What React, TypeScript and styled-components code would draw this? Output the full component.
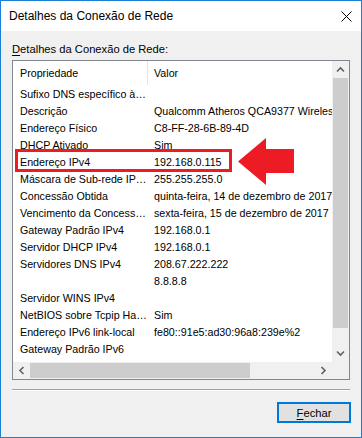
import React from 'react'
import styled, { createGlobalStyle } from 'styled-components'

const GlobalStyle = createGlobalStyle`
  html, body {
    margin: 0;
    padding: 0;
    background: #ffffff;
  }
  body {
    font-family: "Liberation Sans", Arial, sans-serif;
    font-size: 10.7px;
    color: #000000;
  }
`

const Window = styled.div`
  position: relative;
  box-sizing: border-box;
  width: 362px;
  height: 438px;
  border: 1px solid #1c7fd6;
  background: #f0f0f0;
  display: flex;
  flex-direction: column;
  overflow: hidden;
`

const TitleBar = styled.div`
  height: 30px;
  flex: 0 0 30px;
  background: #ffffff;
  display: flex;
  align-items: center;
  justify-content: space-between;
  padding: 0 9px 0 8px;
`

const Title = styled.span`
  font-size: 12px;
  line-height: 14px;
`

const Body = styled.div`
  flex: 1;
  display: flex;
  flex-direction: column;
  padding: 0 11px;
`

const GroupLabel = styled.div`
  margin-top: 11px;
  line-height: 14px;
  height: 14px;
  font-size: 11.2px;
  u {
    text-decoration: underline;
    text-underline-offset: 2px;
  }
`

const ListBox = styled.div`
  margin-top: 4px;
  box-sizing: border-box;
  width: 338px;
  height: 320px;
  border: 1px solid #828790;
  background: #ffffff;
  display: grid;
  grid-template-columns: 319px 17px;
  grid-template-rows: 301px 17px;
`

const Viewport = styled.div`
  overflow: hidden;
  display: flex;
  flex-direction: column;
`

const HeaderRow = styled.div`
  display: flex;
  height: 24px;
  flex: 0 0 24px;
`

const HeaderCell = styled.div<{ $w?: number; $divider?: boolean }>`
  box-sizing: border-box;
  ${(p) => (p.$w ? `width: ${p.$w}px; flex: 0 0 ${p.$w}px;` : 'flex: 1;')}
  padding-left: ${(p) => (p.$divider ? 7 : 6)}px;
  border-right: ${(p) => (p.$divider ? '1px solid #e5e5e5' : 'none')};
  display: flex;
  align-items: center;
  white-space: nowrap;
`

const Row = styled.div<{ $marked?: boolean }>`
  position: relative;
  display: flex;
  height: 17px;
  flex: 0 0 17px;
  align-items: center;
  &::after {
    content: '';
    display: ${(p) => (p.$marked ? 'block' : 'none')};
    position: absolute;
    left: 2px;
    top: -4px;
    width: 217px;
    height: 23px;
    box-sizing: border-box;
    border: 3px solid #ed1c24;
  }
`

const NameCell = styled.div`
  box-sizing: border-box;
  width: 135px;
  flex: 0 0 135px;
  padding: 0 1px 0 7px;
  white-space: nowrap;
  overflow: hidden;
  text-overflow: ellipsis;
`

const ValueCell = styled.div`
  padding-left: 6px;
  white-space: nowrap;
`

const VScroll = styled.div`
  background: #f0f0f0;
  display: flex;
  flex-direction: column;
`

const HScroll = styled.div`
  background: #f0f0f0;
  display: flex;
`

const Corner = styled.div`
  background: #f0f0f0;
`

const ArrowBtn = styled.div`
  width: 17px;
  height: 17px;
  flex: 0 0 17px;
  display: flex;
  align-items: center;
  justify-content: center;
`

const VThumb = styled.div<{ $len: number }>`
  height: ${(p) => p.$len}px;
  flex: 0 0 ${(p) => p.$len}px;
  margin: 0 1px;
  background: #cdcdcd;
`

const HThumb = styled.div<{ $len: number }>`
  width: ${(p) => p.$len}px;
  flex: 0 0 ${(p) => p.$len}px;
  margin: 1px 0;
  background: #cdcdcd;
`

const Track = styled.div`
  flex: 1;
`

const Separator = styled.div`
  margin-top: 9px;
  width: 338px;
  height: 1px;
  background: #a0a0a0;
  border-bottom: 1px solid #ffffff;
`

const Footer = styled.div`
  margin-top: 11px;
  display: flex;
  justify-content: flex-end;
`

const Button = styled.button`
  box-sizing: border-box;
  width: 74px;
  height: 21px;
  margin-right: -1px;
  border: 2px solid #0078d7;
  background: #e1e1e1;
  font-family: inherit;
  font-size: 11.2px;
  color: #000000;
  padding: 0;
  u {
    text-underline-offset: 2px;
  }
`

const Pointer = styled.svg`
  position: absolute;
  left: 237px;
  top: 137px;
`

const Chevron = ({ dir }: { dir: 'up' | 'down' | 'left' | 'right' }) => {
  const rot = { up: 0, right: 90, down: 180, left: 270 }[dir]
  return (
    <svg width="9" height="9" viewBox="0 0 9 9">
      <path
        d="M1 6.5 L4.5 3 L8 6.5"
        fill="none"
        stroke="#606060"
        strokeWidth="1.6"
        transform={`rotate(${rot} 4.5 4.5)`}
      />
    </svg>
  )
}

const CloseIcon = () => (
  <svg width="11" height="11" viewBox="0 0 11 11">
    <path d="M0.5 0.5 L10.5 10.5 M10.5 0.5 L0.5 10.5" stroke="#000" strokeWidth="1" />
  </svg>
)

const rows = [
  ['Sufixo DNS específico à conexão', ''],
  ['Descrição', 'Qualcomm Atheros QCA9377 Wireless Network Adapter'],
  ['Endereço Físico', 'C8-FF-28-6B-89-4D'],
  ['DHCP Ativado', 'Sim'],
  ['Endereço IPv4', '192.168.0.115'],
  ['Máscara de Sub-rede IPv4', '255.255.255.0'],
  ['Concessão Obtida', 'quinta-feira, 14 de dezembro de 2017 09:12:44'],
  ['Vencimento da Concessão', 'sexta-feira, 15 de dezembro de 2017 09:12:44'],
  ['Gateway Padrão IPv4', '192.168.0.1'],
  ['Servidor DHCP IPv4', '192.168.0.1'],
  ['Servidores DNS IPv4', '208.67.222.222'],
  ['', '8.8.8.8'],
  ['Servidor WINS IPv4', ''],
  ['NetBIOS sobre Tcpip Habilitado', 'Sim'],
  ['Endereço IPv6 link-local', 'fe80::91e5:ad30:96a8:239e%2'],
  ['Gateway Padrão IPv6', ''],
  ['Servidor DNS IPv6', ''],
]

const App = () => {
  return (
    <>
      <GlobalStyle />
      <Window>
        <TitleBar>
          <Title>Detalhes da Conexão de Rede</Title>
          <CloseIcon />
        </TitleBar>
        <Body>
          <GroupLabel>
            <u>D</u>etalhes da Conexão de Rede:
          </GroupLabel>
          <ListBox>
            <Viewport>
              <HeaderRow>
                <HeaderCell $w={135} $divider>Propriedade</HeaderCell>
                <HeaderCell>Valor</HeaderCell>
              </HeaderRow>
              {rows.map((r, i) => (
                <Row key={i} $marked={r[0] === 'Endereço IPv4'}>
                  <NameCell>{r[0]}</NameCell>
                  <ValueCell>{r[1]}</ValueCell>
                </Row>
              ))}
            </Viewport>
            <VScroll>
              <ArrowBtn><Chevron dir="up" /></ArrowBtn>
              <VThumb $len={250} />
              <Track />
              <ArrowBtn><Chevron dir="down" /></ArrowBtn>
            </VScroll>
            <HScroll>
              <ArrowBtn><Chevron dir="left" /></ArrowBtn>
              <HThumb $len={220} />
              <Track />
              <ArrowBtn><Chevron dir="right" /></ArrowBtn>
            </HScroll>
            <Corner />
          </ListBox>
          <Separator />
          <Footer>
            <Button>
              <u>F</u>echar
            </Button>
          </Footer>
        </Body>
        <Pointer width="56" height="47" viewBox="0 0 56 47">
          <polygon points="0,23.5 28,0 28,11 56,11 56,35 28,35 28,47" fill="#ed1c24" />
        </Pointer>
      </Window>
    </>
  )
}

export default App
